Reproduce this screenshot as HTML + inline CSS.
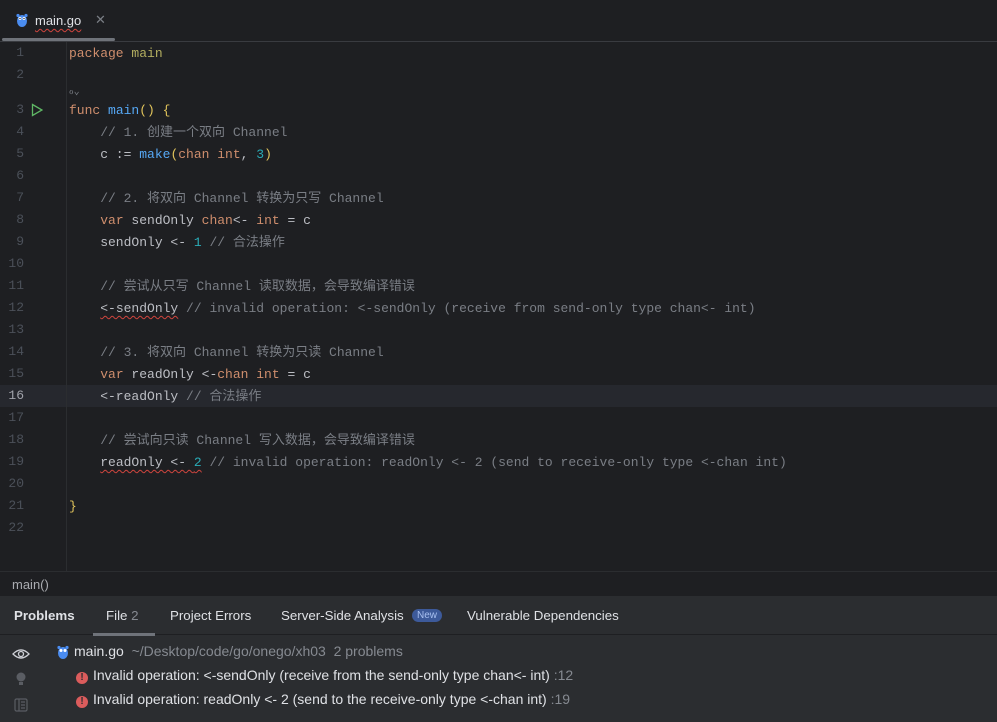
<!DOCTYPE html>
<html><head><meta charset="utf-8"><style>
*{margin:0;padding:0;box-sizing:border-box}
body{width:997px;height:722px;background:#1e1f22;overflow:hidden;position:relative;font-family:"Liberation Sans","Noto Sans CJK SC",sans-serif}
.tabs{position:absolute;left:0;top:0;width:997px;height:42px;background:#1e1f22;border-bottom:1px solid #393b40}
.tab{position:absolute;left:35px;top:13px;color:#dfe1e5;font-size:13px;text-decoration:underline wavy #d0453e;text-underline-offset:3px;text-decoration-thickness:1px}
.x{position:absolute;left:95px;top:12px;color:#7a7e85;font-size:13px}
.tabline{position:absolute;left:2px;top:38px;width:113px;height:3px;background:#6f737a;border-radius:2px}
.gutterline{position:absolute;left:66px;top:42px;width:1px;height:529px;background:#2b2d30}
.ln{position:absolute;left:0;width:24px;text-align:right;color:#4b5059;font:13px "Liberation Mono",monospace;line-height:22px}
.code{position:absolute;left:69px;font:13px "Liberation Mono","Noto Sans CJK SC",monospace;line-height:22px;color:#bcbec4;white-space:pre}
.k{color:#cf8e6d}.f{color:#56a8f5}.n{color:#2aacb8}.c{color:#7a7e85}.p{color:#b3ae60}.b{color:#e0c35b}
.err{text-decoration:underline wavy #d0453e;text-underline-offset:3px;text-decoration-thickness:1px}
.cur{position:absolute;left:0;top:385px;width:997px;height:22px;background:#26282e}
.crumb{position:absolute;left:0;top:571px;width:997px;height:25px;background:#1e1f22;border-top:1px solid #2b2d30;color:#a9abb0;font-size:13px;padding:5px 12px}
.panel{position:absolute;left:0;top:596px;width:997px;height:126px;background:#2b2d30}
.ptabs{position:absolute;top:0;left:0;width:997px;height:39px;border-bottom:1px solid #1e1f22;font-size:13.3px;color:#dfe1e5}
.ptabs span{position:absolute;top:12px}
.badge{background:#3d5a9a;color:#a8c0f0;font-size:10px;border-radius:8px;padding:1px 5px;position:absolute;top:13px}
.row{position:absolute;font-size:14px;color:#dfe1e5;white-space:pre}
.g{color:#868a91}
.e{display:inline-block;width:12px;height:12px;border-radius:50%;background:#db5c5c;color:#2b2d30;font-size:10px;font-weight:bold;text-align:center;line-height:12px;vertical-align:-1px;margin-right:5px;position:relative;top:-1px}
</style></head><body>
<div class="tabs">
<svg style="position:absolute;left:16px;top:13px" width="12" height="14" viewBox="0 0 12 14"><ellipse cx="6" cy="8" rx="5" ry="6" fill="#4a8cf0"/><circle cx="2" cy="2.5" r="1.6" fill="#4a8cf0"/><circle cx="10" cy="2.5" r="1.6" fill="#4a8cf0"/><circle cx="4" cy="5.5" r="1.5" fill="#fff"/><circle cx="8" cy="5.5" r="1.5" fill="#fff"/><circle cx="4" cy="5.5" r=".6" fill="#000"/><circle cx="8" cy="5.5" r=".6" fill="#000"/></svg>
<div class="tab">main.go</div><div class="x">✕</div><div class="tabline"></div>
</div>
<div class="cur"></div>
<div class="gutterline"></div>
<div class="ln" style="top:42px">1</div>
<div class="ln" style="top:64px">2</div>
<div class="ln" style="top:99px">3</div>
<div class="ln" style="top:121px">4</div>
<div class="ln" style="top:143px">5</div>
<div class="ln" style="top:165px">6</div>
<div class="ln" style="top:187px">7</div>
<div class="ln" style="top:209px">8</div>
<div class="ln" style="top:231px">9</div>
<div class="ln" style="top:253px">10</div>
<div class="ln" style="top:275px">11</div>
<div class="ln" style="top:297px">12</div>
<div class="ln" style="top:319px">13</div>
<div class="ln" style="top:341px">14</div>
<div class="ln" style="top:363px">15</div>
<div class="ln" style="top:385px;color:#a1a3ab">16</div>
<div class="ln" style="top:407px">17</div>
<div class="ln" style="top:429px">18</div>
<div class="ln" style="top:451px">19</div>
<div class="ln" style="top:473px">20</div>
<div class="ln" style="top:495px">21</div>
<div class="ln" style="top:517px">22</div>
<svg style="position:absolute;left:31px;top:103px" width="12" height="14" viewBox="0 0 12 14"><path d="M1.5 1.5 L11 7 L1.5 12.5 Z" fill="none" stroke="#5fb865" stroke-width="1.3"/></svg>
<div class="code" style="top:43px"><span class="k">package</span> <span class="p">main</span></div>
<div class="code" style="top:82px;font-size:10px;color:#7a7e85">ℴ⌄</div>
<div class="code" style="top:100px"><span class="k">func</span> <span class="f">main</span><span class="b">()</span> <span class="b">{</span></div>
<div class="code" style="top:122px"><span class="c">    // 1. 创建一个双向 Channel</span></div>
<div class="code" style="top:144px">    c := <span class="f">make</span><span class="b">(</span><span class="k">chan int</span>, <span class="n">3</span><span class="b">)</span></div>
<div class="code" style="top:188px"><span class="c">    // 2. 将双向 Channel 转换为只写 Channel</span></div>
<div class="code" style="top:210px">    <span class="k">var</span> sendOnly <span class="k">chan</span>&lt;- <span class="k">int</span> = c</div>
<div class="code" style="top:232px">    sendOnly &lt;- <span class="n">1</span> <span class="c">// 合法操作</span></div>
<div class="code" style="top:276px"><span class="c">    // 尝试从只写 Channel 读取数据，会导致编译错误</span></div>
<div class="code" style="top:298px">    <span class="err">&lt;-sendOnly</span> <span class="c">// invalid operation: &lt;-sendOnly (receive from send-only type chan&lt;- int)</span></div>
<div class="code" style="top:342px"><span class="c">    // 3. 将双向 Channel 转换为只读 Channel</span></div>
<div class="code" style="top:364px">    <span class="k">var</span> readOnly &lt;-<span class="k">chan int</span> = c</div>
<div class="code" style="top:386px">    &lt;-readOnly <span class="c">// 合法操作</span></div>
<div class="code" style="top:430px"><span class="c">    // 尝试向只读 Channel 写入数据，会导致编译错误</span></div>
<div class="code" style="top:452px">    <span class="err">readOnly &lt;- <span class="n">2</span></span> <span class="c">// invalid operation: readOnly &lt;- 2 (send to receive-only type &lt;-chan int)</span></div>
<div class="code" style="top:496px"><span class="b">}</span></div>
<div class="crumb">main()</div>
<div class="panel">
<div class="ptabs">
<span style="left:14px;font-weight:bold">Problems</span>
<span style="left:106px">File <span class="g" style="position:static">2</span></span>
<div style="position:absolute;left:93px;top:37px;width:62px;height:3px;background:#6f737a"></div>
<span style="left:170px">Project Errors</span>
<span style="left:281px">Server-Side Analysis</span>
<div class="badge" style="left:412px">New</div>
<span style="left:467px">Vulnerable Dependencies</span>
</div>
<svg style="position:absolute;left:12px;top:51px" width="18" height="14" viewBox="0 0 18 14"><path d="M1 7 Q9 -1 17 7 Q9 15 1 7Z" fill="none" stroke="#ced0d6" stroke-width="1.3"/><circle cx="9" cy="7" r="2.5" fill="none" stroke="#ced0d6" stroke-width="1.3"/></svg>
<svg style="position:absolute;left:15px;top:75px" width="12" height="16" viewBox="0 0 12 16"><circle cx="6" cy="6" r="4.5" fill="#5a5d63"/><rect x="4" y="11" width="4" height="3" fill="#5a5d63"/></svg>
<svg style="position:absolute;left:14px;top:102px" width="14" height="14" viewBox="0 0 14 14"><rect x="1" y="1" width="12" height="12" rx="1.5" fill="none" stroke="#5a5d63" stroke-width="1.2"/><path d="M5 1V13M7 4H11M7 7H11M7 10H11" stroke="#5a5d63" stroke-width="1.2"/></svg>
<svg style="position:absolute;left:57px;top:49px" width="12" height="14" viewBox="0 0 12 14"><ellipse cx="6" cy="8" rx="5" ry="6" fill="#4a8cf0"/><circle cx="2" cy="2.5" r="1.6" fill="#4a8cf0"/><circle cx="10" cy="2.5" r="1.6" fill="#4a8cf0"/><circle cx="4" cy="5.5" r="1.5" fill="#fff"/><circle cx="8" cy="5.5" r="1.5" fill="#fff"/></svg>
<div class="row" style="left:74px;top:47px">main.go  <span class="g">~/Desktop/code/go/onego/xh03  2 problems</span></div>
<div class="row" style="left:76px;top:71px"><span class="e">!</span>Invalid operation: &lt;-sendOnly (receive from the send-only type chan&lt;- int) <span class="g">:12</span></div>
<div class="row" style="left:76px;top:95px"><span class="e">!</span>Invalid operation: readOnly &lt;- 2 (send to the receive-only type &lt;-chan int) <span class="g">:19</span></div>
</div>
</body></html>
